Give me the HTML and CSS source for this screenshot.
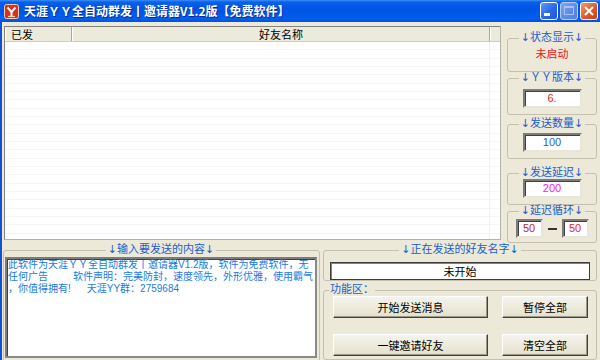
FILE: index.html
```html
<!DOCTYPE html>
<html lang="zh-CN">
<head>
<meta charset="utf-8">
<title>天涯ＹＹ全自动群发丨邀请器V1.2版【免费软件】</title>
<link rel="stylesheet" href="styles.css">
</head>
<body>
<div class="window">
  <div class="titlebar">
    <svg class="app-icon" width="15" height="15" viewBox="0 0 15 15">
      <rect x="0.5" y="0.5" width="14" height="14" rx="2" fill="#d8321e" stroke="#f2c8b8"/>
      <path d="M3.5 3.5 L7.5 8 L11.5 3.5" fill="none" stroke="#fff" stroke-width="2"/>
      <path d="M7.5 8 V12.5" stroke="#fff" stroke-width="2"/>
      <path d="M4 12.5 H11" stroke="#fbe0a0" stroke-width="1.2"/>
    </svg>
    <span class="title">天涯ＹＹ全自动群发丨邀请器V1.2版【免费软件】</span>
    <div class="caption-btns">
      <span class="cbtn min"><svg width="16" height="16" viewBox="0 0 16 16"><rect x="3" y="10" width="6" height="3" fill="#fff"/></svg></span>
      <span class="cbtn max"><svg width="16" height="16" viewBox="0 0 16 16"><rect x="3.5" y="3.5" width="9" height="8" fill="none" stroke="#a9c2ef" stroke-width="1"/><rect x="3" y="3" width="10" height="2" fill="#a9c2ef"/></svg></span>
      <span class="cbtn close"><svg width="16" height="16" viewBox="0 0 16 16"><path d="M4 4 L12 12 M12 4 L4 12" stroke="#fff" stroke-width="2"/></svg></span>
    </div>
  </div>
  <div class="client">
    <div class="top">
      <div class="list">
        <div class="list-head">
          <div class="hcell c1">已发</div>
          <div class="hcell c2">好友名称</div>
          <div class="hcell c3"></div>
        </div>
        <div class="list-body"></div>
      </div>
      <div class="side">
        <fieldset class="grp g1">
          <legend><span class="arr">↓</span>状态显示<span class="arr">↓</span></legend>
          <div class="status">未启动</div>
        </fieldset>
        <fieldset class="grp g2">
          <legend><span class="arr">↓</span>ＹＹ版本<span class="arr">↓</span></legend>
          <div class="edit red">6.</div>
        </fieldset>
        <fieldset class="grp g3">
          <legend><span class="arr">↓</span>发送数量<span class="arr">↓</span></legend>
          <div class="edit blue">100</div>
        </fieldset>
        <fieldset class="grp g4">
          <legend><span class="arr">↓</span>发送延迟<span class="arr">↓</span></legend>
          <div class="edit pink">200</div>
        </fieldset>
        <fieldset class="grp g5">
          <legend><span class="arr">↓</span>延迟循环<span class="arr">↓</span></legend>
          <div class="loop">
            <div class="edit small dred">50</div>
            <span class="dash"></span>
            <div class="edit small red">50</div>
          </div>
        </fieldset>
      </div>
    </div>
    <div class="bottom">
      <fieldset class="grp msg">
        <legend><span class="arr">↓</span>输入要发送的内容<span class="arr">↓</span></legend>
        <div class="memo">此软件为天涯ＹＹ全自动群发丨邀请器V1.2版，软件为免费软件，无<br>任何广告<span class="gap25"></span>软件声明：完美防封，速度领先，外形优雅，使用霸气<br>，你值得拥有!<span class="gap16"></span>天涯YY群：2759684</div>
      </fieldset>
      <div class="rightcol">
        <fieldset class="grp cur">
          <legend><span class="arr">↓</span>正在发送的好友名字<span class="arr">↓</span></legend>
          <div class="curfield">未开始</div>
        </fieldset>
        <fieldset class="grp func">
          <legend class="left">功能区：</legend>
          <div class="btns">
            <button class="btn">开始发送消息</button>
            <button class="btn">暂停全部</button>
            <button class="btn">一键邀请好友</button>
            <button class="btn">清空全部</button>
          </div>
        </fieldset>
      </div>
    </div>
  </div>
</div>
</body>
</html>
```

FILE: styles.css
```css
html, body {
  margin: 0;
  padding: 0;
}
body {
  width: 600px;
  height: 360px;
  overflow: hidden;
  background: #ece9d8;
  font-family: "Noto Sans CJK SC", sans-serif;
  font-size: 12px;
}
.window {
  display: flex;
  flex-direction: column;
  width: 600px;
  height: 360px;
}
.titlebar {
  height: 22px;
  flex: none;
  display: flex;
  align-items: center;
  padding-left: 4px;
  box-sizing: border-box;
  background: linear-gradient(to bottom, #3d8ef6 0, #0a62ea 2px, #0058e6 6px, #0054e3 50%, #005ff0 85%, #0a50d6 100%);
}
.app-icon {
  flex: none;
  display: block;
}
.title {
  margin-left: 5px;
  color: #fff;
  font-weight: bold;
  font-size: 12px;
  line-height: 14px;
  white-space: nowrap;
  text-shadow: 1px 1px 0 #0a2a90;
}
.caption-btns {
  margin-left: auto;
  display: flex;
  gap: 2px;
  padding-right: 2px;
}
.cbtn {
  width: 18px;
  height: 18px;
  box-sizing: border-box;
  border: 1px solid #fff;
  border-radius: 3px;
  display: block;
  overflow: hidden;
}
.cbtn svg {
  display: block;
}
.min {
  background: linear-gradient(135deg, #5c9bf9 0, #2a67ec 55%, #1e58e0 100%);
}
.max {
  border-color: #b9cdf3;
  background: linear-gradient(135deg, #7ea8f2 0, #5a8ae6 60%, #5283e2 100%);
}
.close {
  background: linear-gradient(135deg, #f29a72 0, #e05a2a 55%, #cc3d16 100%);
}
.client {
  flex: 1;
  display: flex;
  flex-direction: column;
  border-left: 2px solid #1250d8;
  min-height: 0;
}
.top {
  height: 222px;
  flex: none;
  display: flex;
}
.list {
  margin: 4px 0 0 2px;
  width: 497px;
  height: 214px;
  box-sizing: border-box;
  border: 1px solid #828282;
  border-right-color: #b5b3a6;
  border-bottom-color: #b5b3a6;
  display: flex;
  flex-direction: column;
  background: #fff;
}
.list-head {
  height: 14px;
  flex: none;
  display: flex;
  background: #ebeadb;
  border-bottom: 1px solid #d0cdbd;
  font-size: 11px;
  line-height: 14px;
  color: #000;
}
.hcell {
  box-sizing: border-box;
  border-right: 1px solid #aca899;
  border-left: 1px solid #fff;
  white-space: nowrap;
}
.c1 {
  width: 67px;
  padding-left: 5px;
}
.c2 {
  width: 418px;
  text-align: center;
}
.c3 {
  flex: 1;
  border-right: none;
}
.list-body {
  flex: 1;
  background-color: #fff;
  background-image:
    linear-gradient(to right, transparent 484px, #f0f0f0 484px, #f0f0f0 485px, transparent 485px),
    repeating-linear-gradient(to bottom, transparent 0, transparent 7.33px, #f6f6f6 7.33px, #f6f6f6 8.33px);
}
.side {
  margin-left: 6px;
  width: 90px;
  padding-top: 10px;
  display: flex;
  flex-direction: column;
}
.grp {
  margin: 0;
  box-sizing: border-box;
  border: 1px solid #c3c0b0;
  border-radius: 3px;
  padding: 0;
  min-width: 0;
}
.grp legend {
  margin: 0 auto;
  padding: 0 2px;
  font-family: "DejaVu Sans", "Noto Sans CJK SC", sans-serif;
  font-size: 11px;
  line-height: 12px;
  color: #1c5ccf;
  white-space: nowrap;
}
.grp legend.left {
  margin: 0 0 0 -4px;
  padding: 0 1px;
}
.arr {
  font-family: "DejaVu Sans", sans-serif;
  font-size: 11px;
}
.g1 { height: 40px; padding-top: 2px; }
.g2 { height: 43px; padding-top: 5px; }
.g3 { height: 41px; padding-top: 3px; margin-top: 3px; }
.g4 { height: 38px; padding-top: 0; margin-top: 8px; }
.g5 { height: 38px; padding-top: 2px; }
.status {
  text-align: center;
  color: #f01818;
  font-size: 11px;
  line-height: 14px;
}
.edit {
  width: 59px;
  height: 19px;
  margin: 0 auto;
  box-sizing: border-box;
  background: #fff;
  border: 2px solid;
  border-color: #7c7c7c #e8e6dc #e8e6dc #7c7c7c;
  box-shadow: inset 1px 1px 0 #404040;
  text-align: center;
  font-family: "Liberation Sans", "Noto Sans CJK SC", sans-serif;
  font-size: 11px;
  line-height: 15px;
}
.red { color: #e81c1c; }
.dred { color: #b8282c; }
.blue { color: #2a5fd0; }
.pink { color: #f020f0; }
.loop {
  display: flex;
  align-items: center;
  justify-content: center;
  gap: 5px;
}
.edit.small {
  width: 27px;
  margin: 0;
}
.dash {
  display: block;
  width: 9px;
  height: 2px;
  background: #333;
}
.bottom {
  flex: 1;
  display: flex;
  padding-left: 1px;
  min-height: 0;
}
.msg {
  width: 317px;
  height: 130px;
  flex: none;
  padding: 1px 2px 0 1px;
}
.memo {
  height: 101px;
  box-sizing: border-box;
  background: #fff;
  border: 2px solid;
  border-color: #7c7c7c #8a8a8a #8a8a8a #7c7c7c;
  box-shadow: inset 1px 1px 0 #404040;
  padding: 0 0 0 1px;
  color: #1a7ae2;
  font-family: "Liberation Sans", "Noto Sans CJK SC", sans-serif;
  font-size: 10px;
  line-height: 12px;
  white-space: nowrap;
  overflow: hidden;
}
.gap25 {
  display: inline-block;
  width: 25px;
}
.gap16 {
  display: inline-block;
  width: 16px;
}
.rightcol {
  margin-left: 3px;
  width: 274px;
  display: flex;
  flex-direction: column;
}
.cur {
  height: 41px;
  padding: 6px 6px 0 6px;
}
.curfield {
  height: 18px;
  box-sizing: border-box;
  background: #fff;
  border: 1px solid #3c3c3c;
  box-shadow: inset 1px 1px 0 #808080;
  text-align: center;
  color: #000;
  font-size: 11px;
  line-height: 16px;
}
.func {
  margin-top: 3px;
  height: 90px;
  padding: 0 0 0 9px;
}
.btns {
  display: grid;
  grid-template-columns: 155px 86px;
  grid-auto-rows: 22px;
  column-gap: 14px;
  row-gap: 16px;
}
.btn {
  margin: 0;
  padding: 0;
  box-sizing: border-box;
  background: linear-gradient(to bottom, #f4f3ee 0, #ece9d8 60%, #e2dfd0 100%);
  border: 1px solid;
  border-color: #ffffff #404040 #404040 #ffffff;
  box-shadow: inset -1px -1px 0 #9a988c;
  font-family: "Noto Sans CJK SC", sans-serif;
  font-size: 11px;
  color: #000;
}
```
